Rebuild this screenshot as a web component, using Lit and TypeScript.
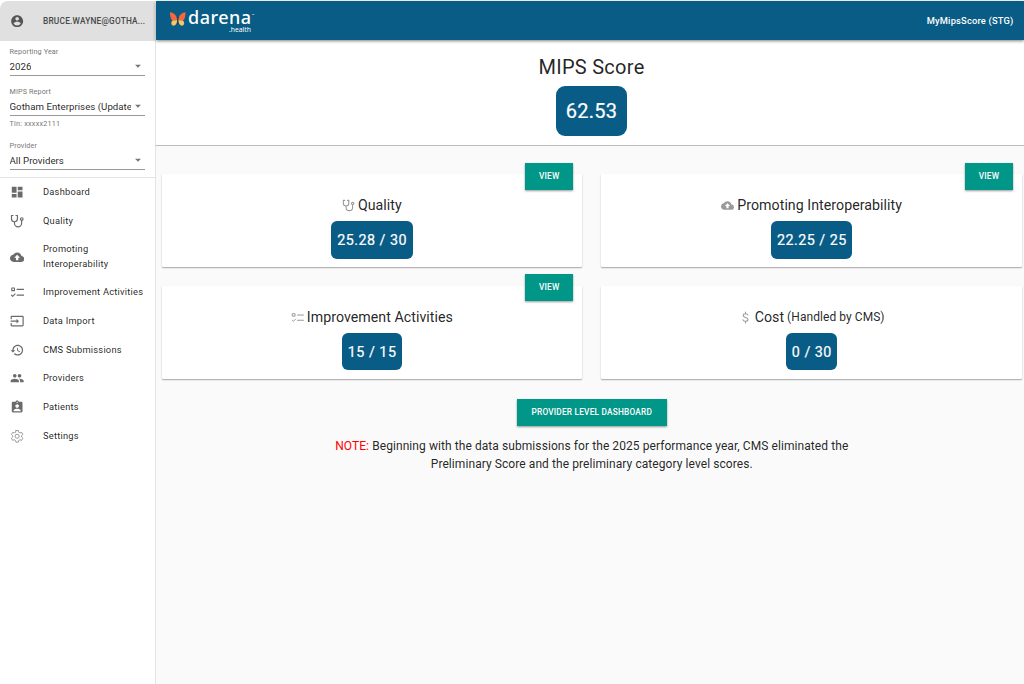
import { LitElement, html, css, svg, nothing } from "lit";
import { customElement } from "lit/decorators.js";

const stroke = (d: string, w = 2) =>
  svg`<path d=${d} fill="none" stroke="currentColor" stroke-width=${w} stroke-linecap="round" stroke-linejoin="round"/>`;
const fill = (d: string) => svg`<path d=${d} fill="currentColor" fill-rule="evenodd"/>`;

const shapes: Record<string, unknown> = {
  account: fill("M12 2C6.48 2 2 6.48 2 12s4.48 10 10 10 10-4.48 10-10S17.52 2 12 2zm0 3c1.66 0 3 1.34 3 3s-1.34 3-3 3-3-1.34-3-3 1.34-3 3-3zm0 14.2c-2.5 0-4.71-1.28-6-3.22.03-1.99 4-3.08 6-3.08 1.99 0 5.97 1.09 6 3.08-1.29 1.94-3.5 3.22-6 3.22z"),
  dashboard: fill("M3 13h8V3H3v10zm0 8h8v-6H3v6zm10 0h8V11h-8v10zm0-18v6h8V3h-8z"),
  stethoscope: svg`${stroke("M5 2.5H2.5V8a5 5 0 0 0 10 0V2.5H10M7.5 13v2.500a6 6 0 0 0 12 0V11", 2)}<circle cx="19.700" cy="8.500" r="2.200" fill="none" stroke="currentColor" stroke-width="2"/>`,
  cloud: fill("M19.350 10.040C18.670 6.590 15.640 4 12 4 9.110 4 6.600 5.640 5.350 8.040 2.340 8.360 0 10.910 0 14c0 3.310 2.690 6 6 6h13c2.760 0 5-2.240 5-5 0-2.640-2.050-4.780-4.650-4.960zM14 13v4h-4v-4H7l5-5 5 5h-3z"),
  tasks: svg`${stroke("M3 5h4.500v4.500H3zM2.500 17l2 2 4-4", 1.800)}${stroke("M12 7.500h11M12 17h11", 2)}`,
  input: fill("M21 3.010H3c-1.100 0-2 .9-2 2V9h2V4.990h18v14.030H3V15H1v4.010c0 1.100.9 1.980 2 1.980h18c1.100 0 2-.88 2-1.980v-14c0-1.110-.9-2-2-2zM11 16l4-4-4-4v3H1v2h10v3z"),
  history: fill("M13 3c-4.970 0-9 4.030-9 9H1l3.890 3.890.07.14L9 12H6c0-3.870 3.130-7 7-7s7 3.130 7 7-3.130 7-7 7c-1.930 0-3.680-.79-4.940-2.060l-1.420 1.420C8.270 19.990 10.510 21 13 21c4.970 0 9-4.030 9-9s-4.030-9-9-9zm-1 5v5l4.280 2.540.72-1.210-3.500-2.080V8H12z"),
  people: fill("M16 11c1.660 0 2.990-1.340 2.990-3S17.660 5 16 5c-1.660 0-3 1.340-3 3s1.340 3 3 3zm-8 0c1.660 0 2.990-1.340 2.990-3S9.660 5 8 5C6.340 5 5 6.340 5 8s1.340 3 3 3zm0 2c-2.330 0-7 1.170-7 3.500V19h14v-2.500c0-2.330-4.670-3.500-7-3.500zm8 0c-.29 0-.62.02-.97.05 1.160.84 1.970 1.970 1.970 3.450V19h6v-2.500c0-2.330-4.670-3.500-7-3.500z"),
  badge: fill("M19 3h-4.180C14.400 1.840 13.300 1 12 1c-1.300 0-2.400.84-2.820 2H5c-1.100 0-2 .9-2 2v14c0 1.100.9 2 2 2h14c1.100 0 2-.9 2-2V5c0-1.100-.9-2-2-2zm-7 0c.55 0 1 .45 1 1s-.45 1-1 1-1-.45-1-1 .45-1 1-1zm0 4c1.660 0 3 1.340 3 3s-1.340 3-3 3-3-1.340-3-3 1.340-3 3-3zm6 12H6v-1.400c0-2 4-3.100 6-3.100s6 1.100 6 3.100V19z"),
  gear: svg`${stroke("M10 2.500h4l.7 3 2 1.100 2.900-.9 2 3.500-2.200 2v2.200l2.200 2.100-2 3.500-2.900-.9-2 1.100-.7 2.900h-4l-.7-2.900-2-1.100-2.900.9-2-3.500 2.200-2.100v-2.200l-2.200-2 2-3.500 2.900.9 2-1.100z", 1.400)}<circle cx="12" cy="12.200" r="3.400" fill="none" stroke="currentColor" stroke-width="1.400"/>`,
  dollar: stroke("M16.500 7.500C16 5.800 14.400 5 12 5 9.300 5 7.700 6.200 7.700 8.200c0 4.600 9 2.600 9 7.300 0 2.200-1.900 3.500-4.700 3.500-2.600 0-4.400-1-4.900-3M12 2v3M12 19v3", 1.900),
  caret: fill("M7 10l5 5 5-5z"),
};
const icon = (name: string) => html`<svg class="icon ${name}" viewBox="0 0 24 24">${shapes[name]}</svg>`;

const nav: [string, string][] = [
  ["dashboard", "Dashboard"],
  ["stethoscope", "Quality"],
  ["cloud", "Promoting Interoperability"],
  ["tasks", "Improvement Activities"],
  ["input", "Data Import"],
  ["history", "CMS Submissions"],
  ["people", "Providers"],
  ["badge", "Patients"],
  ["gear", "Settings"],
];

const cards = [
  { icon: "stethoscope", title: "Quality", score: "25.28 / 30", view: true },
  { icon: "cloud", title: "Promoting Interoperability", score: "22.25 / 25", view: true },
  { icon: "tasks", title: "Improvement Activities", score: "15 / 15", view: true },
  { icon: "dollar", title: "Cost", note: "(Handled by CMS)", score: "0 / 30", view: false },
];

@customElement("app-root")
export class AppRoot extends LitElement {
  static styles = css`
    :host {
      display: grid;
      grid-template-columns: 155px 1fr;
      box-sizing: border-box;
      height: 684px;
      padding-top: 1px;
      overflow: hidden;
      background: #fff;
      font-family: Roboto, "Liberation Sans", sans-serif;
      color: rgba(0, 0, 0, 0.87);
    }
    * { box-sizing: border-box; }
    .icon { width: 14.300px; height: 14.300px; display: block; flex: none; }
    .side { display: flex; flex-direction: column; background: #fff; min-width: 0; }
    .user {
      height: 39.500px; background: #e0e0e0; border-top-left-radius: 8px;
      display: flex; align-items: center; padding-left: 10px; gap: 18.700px;
      font-size: 8.300px; font-weight: 500; letter-spacing: 0.210px; color: #484848;
      white-space: nowrap;
    }
    .user .icon { color: #555; }
    .fields { height: 137px; border-bottom: 1px solid #e2e2e2; padding: 5.500px 10px 0 9.500px; }
    .field { height: 40px; }
    .field.tall { height: 54px; }
    .label { font-size: 7.200px; line-height: 11px; letter-spacing: 0.130px; color: #777; white-space: nowrap; }
    .select {
      display: flex; align-items: center; justify-content: space-between;
      height: 19px; border-bottom: 1px solid #999; font-size: 9.700px; letter-spacing: 0.020px;
    }
    .select .value { max-width: 122px; overflow: hidden; white-space: nowrap; }
    .select .icon { color: #757575; width: 14px; height: 14px; flex: none; }
    .hint { font-size: 7.200px; line-height: 10px; letter-spacing: 0.240px; color: #777; padding-top: 3px; }
    nav { padding-top: 0.400px; }
    .item {
      min-height: 28.650px; display: flex; align-items: center;
      padding-left: 9.500px; gap: 19.200px; font-size: 9.300px; line-height: 14.300px;
      letter-spacing: 0.230px;
    }
    .item .icon { color: #6b6b6b; }
    .item .icon.gear { color: #888; }
    .item .text { max-width: 110px; }
    .item.double .text { width: 80px; }
    .item.double { height: 43px; }
    .main { display: flex; flex-direction: column; background: #fafafa; min-width: 0; }
    .bar {
      height: 39px; flex: none; background: #085c85; color: #fff; position: relative;
      margin-left: 0.500px;
      box-shadow: 0 1px 3px rgba(0, 0, 0, 0.5);
      display: flex; align-items: center; justify-content: space-between; padding: 0 10.500px 0 13px;
    }
    .brand { display: flex; align-items: flex-start; gap: 2px; height: 29px; }
    .fly { width: 17.500px; height: 16px; margin-top: 5px; }
    .words { display: flex; flex-direction: column; align-items: flex-end; padding-top: 1px; font-family: "Noto Sans", sans-serif; }
    .name { display: flex; font-size: 18px; line-height: 21px; font-weight: 500; letter-spacing: 0.500px; }
    .tm { font-size: 3px; line-height: 16px; letter-spacing: 0; }
    .sub { font-size: 6.800px; line-height: 8px; letter-spacing: 0; margin: -2.500px 3px 0 0; }
    .tenant { font-size: 9.300px; font-weight: 500; letter-spacing: 0.200px; }
    .hero {
      height: 105.500px; flex: none; background: #fff; border-bottom: 1px solid #bdbdbd;
      border-left: 1px solid #e4e4e4;
      display: flex; flex-direction: column; align-items: center; padding: 15px 0 0 3px;
    }
    .hero .title { font-size: 20px; line-height: 25px; letter-spacing: 0.280px; }
    .total {
      width: 70.500px; height: 50.500px; margin-top: 5.500px; border-radius: 9px; background: #085c85; color: #fff;
      display: grid; place-items: center; font-size: 20px; letter-spacing: 0.300px;
      -webkit-text-stroke: 0.200px #fff;
    }
    .body { flex: 1; border-left: 1px solid #e4e4e4; padding: 28.500px 2px 0 5.500px; }
    .cards { display: grid; grid-template-columns: 1fr 1fr; gap: 18.600px 19px; }
    .card {
      position: relative; height: 93px; background: #fff; border-radius: 1px;
      box-shadow: 0 1px 1.500px rgba(0, 0, 0, 0.34);
      display: flex; flex-direction: column; align-items: center; padding-top: 21px;
    }
    .head { display: flex; align-items: center; height: 20px; gap: 3px; font-size: 14.200px; letter-spacing: 0.040px; }
    .head .icon { color: #999; width: 13px; height: 13px; margin-top: 1px; }
    .head .note { font-size: 12px; letter-spacing: 0.060px; }
    .score {
      height: 37.600px; padding: 0 5.500px 0 6px; margin-top: 6.300px; border-radius: 6px; background: #085c85; color: #fff;
      display: grid; place-items: center; font-size: 14.300px; letter-spacing: 0.490px;
      -webkit-text-stroke: 0.200px #fff;
    }
    .btn {
      height: 27px; background: #009688; color: #fff; font-size: 8.300px; font-weight: 500;
      letter-spacing: 0.200px; display: grid; place-items: center; padding-bottom: 1px;
      box-shadow: 0 1px 2px rgba(0, 0, 0, 0.4);
    }
    .view { position: absolute; right: 9px; top: -11.500px; width: 48px; }
    .wide { width: 150px; margin: 20.200px auto 0; }
    .notice {
      margin-top: 12.300px; text-align: center; font-size: 12px; line-height: 17.500px; letter-spacing: 0.075px;
    }
    .notice .red { color: #f00; }
  `;

  render() {
    return html`
      <aside class="side">
        <div class="user">${icon("account")}<span>BRUCE.WAYNE@GOTHA...</span></div>
        <div class="fields">
          ${this.field("Reporting Year", "2026")}
          ${this.field("MIPS Report", "Gotham Enterprises (Update", "Tin: xxxxx2111")}
          ${this.field("Provider", "All Providers")}
        </div>
        <nav>
          ${nav.map(([i, t]) => html`<div class="item ${i === "cloud" ? "double" : ""}">${icon(i)}<span class="text">${t}</span></div>`)}
        </nav>
      </aside>
      <main class="main">
        <header class="bar">
          <div class="brand">
            <svg class="fly" viewBox="0 0 18 16">
              <path d="M8.600 9.500C8 4.500 5.500 1.200 1 1 .9 4.500 1.700 8.500 4 9.800z" fill="#f4683b"/>
              <path d="M9.400 9.500C10 4.500 12.500 1.200 17 1 17.100 4.500 16.300 8.500 14 9.800z" fill="#f4683b"/>
              <path d="M8.500 9.300 4 9.600C1.800 10.600 1.800 14.300 4.300 15 6.900 14.800 8.400 12 8.500 9.300z" fill="#f6c667"/>
              <path d="M9.500 9.300 14 9.600C16.200 10.600 16.200 14.300 13.700 15 11.100 14.800 9.600 12 9.500 9.300z" fill="#f6c667"/>
              <path d="M9 6v7" stroke="#3b3540" stroke-width="1"/>
            </svg>
            <div class="words">
              <div class="name">darena<span class="tm">™</span></div>
              <div class="sub">.health</div>
            </div>
          </div>
          <div class="tenant">MyMipsScore (STG)</div>
        </header>
        <section class="hero">
          <div class="title">MIPS Score</div>
          <div class="total">62.53</div>
        </section>
        <section class="body">
          <div class="cards">
            ${cards.map(
              (c) => html`<div class="card">
                ${c.view ? html`<div class="btn view">VIEW</div>` : nothing}
                <div class="head">${icon(c.icon)}<span>${c.title}</span>${c.note ? html`<span class="note">${c.note}</span>` : nothing}</div>
                <div class="score">${c.score}</div>
              </div>`
            )}
          </div>
          <div class="btn wide">PROVIDER LEVEL DASHBOARD</div>
          <div class="notice">
            <span class="red">NOTE:</span> Beginning with the data submissions for the 2025 performance year, CMS eliminated the<br />
            Preliminary Score and the preliminary category level scores.
          </div>
        </section>
      </main>
    `;
  }

  private field(label: string, value: string, hint = "") {
    return html`<div class="field ${hint ? "tall" : ""}">
      <div class="label">${label}</div>
      <div class="select"><span class="value">${value}</span>${icon("caret")}</div>
      ${hint ? html`<div class="hint">${hint}</div>` : nothing}
    </div>`;
  }
}
